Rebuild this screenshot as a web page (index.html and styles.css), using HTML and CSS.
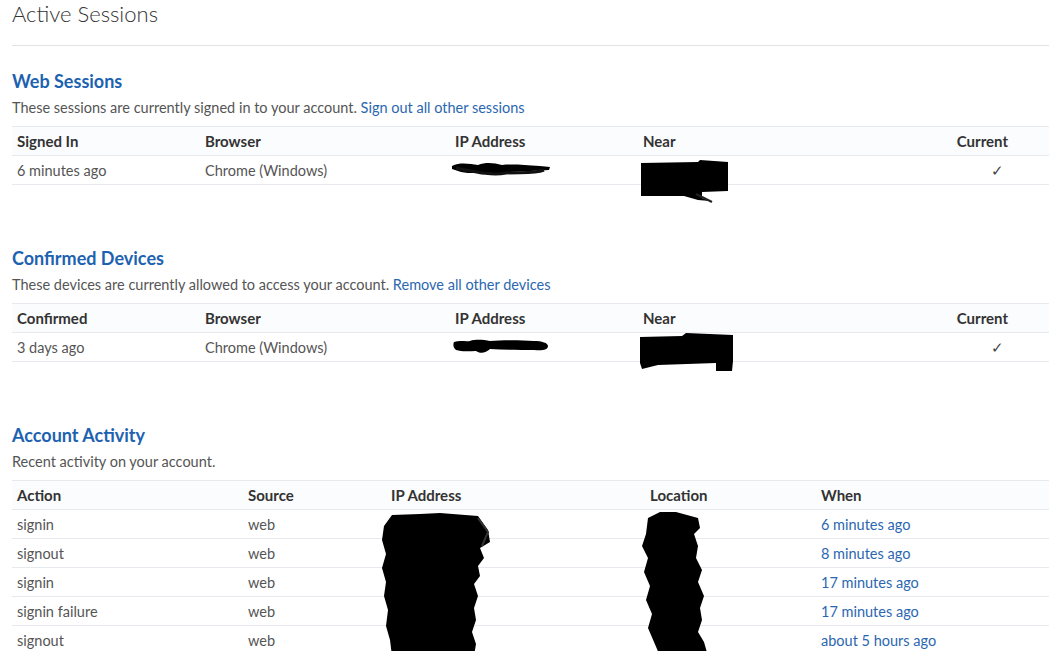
FILE: index.html
```html
<!DOCTYPE html>
<html lang="en">
<head>
  <meta charset="UTF-8" />
  <title>Active Sessions</title>
  <link rel="stylesheet" href="styles.css">
</head>
<body>

  <div class="page">
    <h1 class="page-title">Active Sessions</h1>
    <hr class="divider">

    <section class="block">
      <h2 class="block-title">Web Sessions</h2>
      <p class="block-desc">These sessions are currently signed in to your account. <a href="#">Sign out all other sessions</a></p>
      <table class="grid">
        <colgroup>
          <col class="w188"><col class="w250"><col class="w188"><col>
        </colgroup>
        <thead>
          <tr><th>Signed In</th><th>Browser</th><th>IP Address</th><th>Near</th><th class="right">Current</th></tr>
        </thead>
        <tbody>
          <tr>
            <td>6 minutes ago</td>
            <td>Chrome (Windows)</td>
            <td class="hidden-cell">
              <svg class="redact ip-a" width="104" height="26" viewBox="0 0 104 26">
                <path d="M2 10 C10 6 20 8 28 9 C36 6 44 7 52 9 C62 8 74 9 90 10 L100 11 L99 14 C88 15 72 15 60 16 C52 19 44 18 36 16 C26 17 16 18 8 15 L2 13 Z" fill="#000"/>
                <path d="M6 12 C22 15 40 20 56 17 C70 16 84 18 94 14" stroke="#111" stroke-width="3" fill="none"/>
              </svg>
            </td>
            <td class="hidden-cell">
              <svg class="redact near-a" width="96" height="48" viewBox="0 0 96 48">
                <path d="M3 7 L60 6 L62 4 L90 6 L90 35 L64 36 L64 42 L72 45 L60 44 L46 40 L3 40 Z" fill="#000"/>
                <path d="M58 38 L74 46" stroke="#222" stroke-width="2"/>
              </svg>
            </td>
            <td class="right check">&#10003;</td>
          </tr>
        </tbody>
      </table>
    </section>

    <section class="block">
      <h2 class="block-title">Confirmed Devices</h2>
      <p class="block-desc">These devices are currently allowed to access your account. <a href="#">Remove all other devices</a></p>
      <table class="grid">
        <colgroup>
          <col class="w188"><col class="w250"><col class="w188"><col>
        </colgroup>
        <thead>
          <tr><th>Confirmed</th><th>Browser</th><th>IP Address</th><th>Near</th><th class="right">Current</th></tr>
        </thead>
        <tbody>
          <tr>
            <td>3 days ago</td>
            <td>Chrome (Windows)</td>
            <td class="hidden-cell">
              <svg class="redact ip-b" width="104" height="26" viewBox="0 0 104 26">
                <path d="M4 9 C10 7 16 9 20 8 C26 6 34 7 40 8 C52 7 70 7 84 8 C92 8 98 10 98 13 C98 17 92 18 84 17 C70 17 54 17 40 16 C36 20 30 21 26 18 C20 18 12 19 6 17 C3 15 3 11 4 9 Z" fill="#000"/>
              </svg>
            </td>
            <td class="hidden-cell">
              <svg class="redact near-b" width="100" height="42" viewBox="0 0 100 42">
                <path d="M2 4 L44 3 L48 0 L95 2 L95 28 L94 38 L78 38 L78 30 L20 32 L4 36 L2 30 Z" fill="#000"/>
              </svg>
            </td>
            <td class="right check">&#10003;</td>
          </tr>
        </tbody>
      </table>
    </section>

    <section class="block">
      <h2 class="block-title">Account Activity</h2>
      <p class="block-desc">Recent activity on your account.</p>
      <table class="grid">
        <colgroup>
          <col class="w231"><col class="w143"><col class="w259"><col class="w171"><col>
        </colgroup>
        <thead>
          <tr><th>Action</th><th>Source</th><th>IP Address</th><th>Location</th><th>When</th></tr>
        </thead>
        <tbody>
          <tr>
            <td>signin</td>
            <td>web</td>
            <td class="hidden-cell">
              <svg class="redact ip-c" width="120" height="150" viewBox="0 0 120 150">
                <path d="M4 16 L12 5 L40 4 L60 3 L98 6 L108 20 L110 32 L100 38 L104 48 L98 56 L100 66 L94 74 L98 86 L94 98 L96 110 L92 122 L96 134 L94 146 L12 146 L10 130 L6 116 L8 100 L4 86 L6 72 L2 58 L6 44 L2 30 Z" fill="#000"/>
                <path d="M98 8 L108 22 L102 36" stroke="#333" stroke-width="2" fill="none"/>
              </svg>
            </td>
            <td class="hidden-cell">
              <svg class="redact loc-c" width="72" height="150" viewBox="0 0 72 150">
                <path d="M6 8 L18 2 L34 2 L56 8 L58 18 L52 24 L56 36 L54 48 L60 60 L56 72 L62 86 L58 98 L60 110 L56 122 L62 132 L66 146 L18 146 L12 132 L6 118 L10 104 L4 90 L8 76 L2 62 L6 48 L0 36 L4 24 Z" fill="#000"/>
              </svg>
            </td>
            <td><a href="#">6 minutes ago</a></td>
          </tr>
          <tr><td>signout</td><td>web</td><td></td><td></td><td><a href="#">8 minutes ago</a></td></tr>
          <tr><td>signin</td><td>web</td><td></td><td></td><td><a href="#">17 minutes ago</a></td></tr>
          <tr><td>signin failure</td><td>web</td><td></td><td></td><td><a href="#">17 minutes ago</a></td></tr>
          <tr><td>signout</td><td>web</td><td></td><td></td><td><a href="#">about 5 hours ago</a></td></tr>
        </tbody>
      </table>
    </section>
  </div>

</body>
</html>
```

FILE: styles.css
```css
body {
  margin: 0;
  font-family: Lato, "Open Sans", sans-serif;
  color: #555;
  background: #fff;
  overflow: hidden;
}

.page {
  padding: 0 0 0 12px;
}

.page-title {
  margin: 0;
  font-size: 22px;
  line-height: 28px;
  font-weight: 300;
  color: #333;
}

.divider {
  border: none;
  border-top: 1px solid #e3e3e3;
  margin: 17px 0 0 0;
}

.block {
  margin-top: 24px;
}

.block + .block {
  margin-top: 62px;
}

.block-title {
  margin: 0;
  font-size: 18px;
  line-height: 22px;
  font-weight: 700;
  color: #1d62b1;
}

.block-desc {
  margin: 6px 0 8px 0;
  font-size: 14.5px;
  line-height: 20px;
  color: #555;
}

a {
  color: #2b67b0;
  text-decoration: none;
}

.grid {
  width: 100%;
  border-collapse: collapse;
  table-layout: fixed;
  font-size: 14.5px;
}

.w188 { width: 188px; }
.w250 { width: 250px; }
.w231 { width: 231px; }
.w143 { width: 143px; }
.w259 { width: 259px; }
.w171 { width: 171px; }

.grid th {
  text-align: left;
  font-weight: 700;
  font-size: 15px;
  color: #333;
  background: #fbfcfd;
  height: 28px;
  padding: 0 5px;
  border-top: 1px solid #e6e9ed;
  border-bottom: 1px solid #e6e9ed;
}

.grid td {
  height: 28px;
  padding: 0 5px;
  color: #555;
  border-bottom: 1px solid #e6e9ed;
  white-space: nowrap;
}

.grid th.right,
.grid td.right {
  text-align: right;
  padding-right: 41px;
}

.grid td.check {
  padding-right: 45px;
  color: #444;
}

.hidden-cell {
  position: relative;
}

.redact {
  position: absolute;
  display: block;
}

.ip-a { left: 0; top: 0; }
.near-a { left: 0; top: 0; }
.ip-b { left: 0; top: 0; }
.near-b { left: 0; top: 0; }
.ip-c { left: -6px; top: 0; }
.loc-c { left: -3px; top: 0; }
```
